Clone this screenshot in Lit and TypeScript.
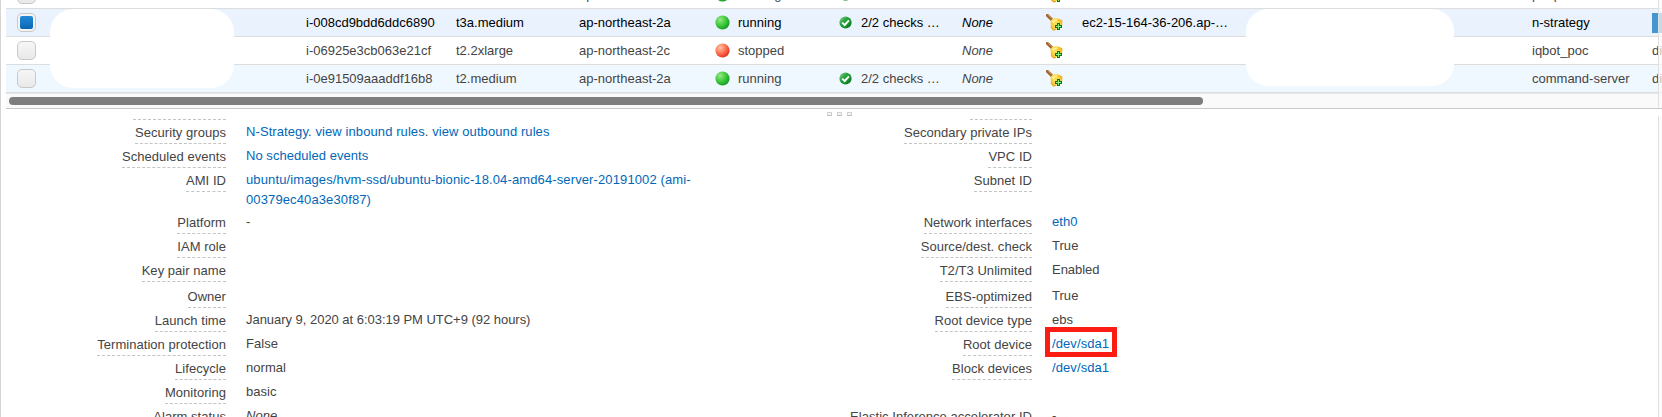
import { LitElement, html, svg, css, nothing } from "lit";
import { customElement, property } from "lit/decorators.js";

interface Instance {
  id: string; type: string; zone: string; state: "running" | "stopped";
  checks: boolean; dns: string; key: string; extra: string; selected?: boolean;
}
interface Detail { label: string; links?: string[]; text?: string; italic?: boolean; kind?: string; marked?: boolean; }

const INSTANCES: Instance[] = [
  { id: "", type: "", zone: "ap-northeast-2a", state: "running", checks: true, dns: "", key: "people", extra: "" },
  { id: "i-008cd9bdd6ddc6890", type: "t3a.medium", zone: "ap-northeast-2a", state: "running", checks: true, dns: "ec2-15-164-36-206.ap-…", key: "n-strategy", extra: "", selected: true },
  { id: "i-06925e3cb063e21cf", type: "t2.2xlarge", zone: "ap-northeast-2c", state: "stopped", checks: false, dns: "", key: "iqbot_poc", extra: "disabled" },
  { id: "i-0e91509aaaddf16b8", type: "t2.medium", zone: "ap-northeast-2a", state: "running", checks: true, dns: "", key: "command-server", extra: "disabled" },
];

const LEFT: Detail[] = [
  { label: "Security groups", links: ["N-Strategy", "view inbound rules", "view outbound rules"], kind: "wide" },
  { label: "Scheduled events", links: ["No scheduled events"] },
  { label: "AMI ID", links: ["ubuntu/images/hvm-ssd/ubuntu-bionic-18.04-amd64-server-20191002 (ami-00379ec40a3e30f87)"], kind: "tall" },
  { label: "Platform", text: "-" },
  { label: "IAM role" },
  { label: "Key pair name" },
  { label: "Owner", kind: "spaced" },
  { label: "Launch time", text: "January 9, 2020 at 6:03:19 PM UTC+9 (92 hours)", kind: "tight" },
  { label: "Termination protection", text: "False" },
  { label: "Lifecycle", text: "normal" },
  { label: "Monitoring", text: "basic" },
  { label: "Alarm status", text: "None", italic: true },
];
const RIGHT: Detail[] = [
  { label: "Secondary private IPs" },
  { label: "VPC ID" },
  { label: "Subnet ID", kind: "tall" },
  { label: "Network interfaces", links: ["eth0"] },
  { label: "Source/dest. check", text: "True" },
  { label: "T2/T3 Unlimited", text: "Enabled", kind: "tight" },
  { label: "EBS-optimized", text: "True", kind: "spaced" },
  { label: "Root device type", text: "ebs" },
  { label: "Root device", links: ["/dev/sda1"], marked: true, kind: "wide" },
  { label: "Block devices", links: ["/dev/sda1"], kind: "wide" },
  { label: "", text: "" },
  { label: "Elastic Inference accelerator ID", text: "-" },
];

const bell = html`<svg class="bell" width="17" height="17" viewBox="0 0 17 17">
  <defs><linearGradient id="b" x1="0" y1="0.8" x2="1" y2="0.2">
    <stop offset="0" stop-color="#f7b31d"/><stop offset=".4" stop-color="#ffe35c"/><stop offset=".7" stop-color="#ffd23a"/><stop offset="1" stop-color="#eda51c"/>
  </linearGradient></defs>
  <path d="M1.4 1.4 L6.6 6.4" stroke="#a0652c" stroke-width="3" stroke-linecap="round"/>
  <path d="M1.9 1 L7 5.4" stroke="#d8a56a" stroke-width=".8"/>
  <path d="M4.6 7.4 Q6 3.8 10.4 4.2 Q14 4.6 16.4 6.4 L16.2 10.5 Q13.5 15 7.8 16.2 Q5.4 15.4 4.9 12 Q4.6 9.5 4.6 7.4Z" fill="url(#b)"/>
  <path d="M6.6 8.4 Q8 6 11 6.2" stroke="#fff6b0" stroke-width="1.3" fill="none"/>
  <path d="M5 12.6 Q5.8 15.4 7.8 16.2 L10 15.4" stroke="#d98d18" stroke-width=".8" fill="none"/>
  <path d="M11 9h3v2h2v3h-2v2h-3v-2H9v-3h2z" fill="#08751a"/>
  <path d="M12 10h1v2h2v1h-2v2h-1v-2h-2v-1h2z" fill="#8cf07c"/>
</svg>`;

const check = html`<svg width="13" height="13" viewBox="0 0 13 13">
  <defs><linearGradient id="c" x1="0" y1="0" x2="1" y2="1">
    <stop offset="0" stop-color="#9bd09b"/><stop offset=".4" stop-color="#23a33a"/><stop offset="1" stop-color="#067019"/>
  </linearGradient></defs>
  <circle cx="6.5" cy="6.5" r="6.1" fill="url(#c)"/>
  <path d="M3.2 6.6 L5.7 9 L9.9 4.3" stroke="#fff" stroke-width="2" fill="none"/>
</svg>`;

const ball = (state: string) => html`<svg width="15" height="15" viewBox="0 0 15 15">
  <defs><radialGradient id="s" cx=".34" cy=".3" r=".75">
    ${state === "running"
      ? svg`<stop offset="0" stop-color="#93ea85"/><stop offset=".55" stop-color="#3fc83c"/><stop offset="1" stop-color="#139a25"/>`
      : svg`<stop offset="0" stop-color="#ffc2a4"/><stop offset=".55" stop-color="#fd7152"/><stop offset="1" stop-color="#e02c1a"/>`}
  </radialGradient></defs>
  <circle cx="7.5" cy="7.5" r="7.1" fill="url(#s)"/>
</svg>`;

@customElement("instance-row")
export class InstanceRow extends LitElement {
  @property({ attribute: false }) data!: Instance;
  static styles = css`
    :host { display: block; }
    .row { box-sizing: border-box; height: 28px; border-bottom: 1px solid #ddd; display: grid; align-items: center;
      grid-template-columns: 289px 150px 123px 136px 23px 101px 22px 101px 84px 36px 450px 120px 40px;
      padding-left: 11px; color: #444; white-space: nowrap; overflow: hidden; line-height: 27px; }
    .selected { color: #000; }
    .box { box-sizing: border-box; width: 19px; height: 19px; border: 1px solid #c8c8c8; border-radius: 5px;
      background: linear-gradient(#f6f6f6, #e9e9e9); display: grid; place-items: center; }
    .selected .box { background: #f4f4f4; }
    .tick { width: 13px; height: 13px; border-radius: 2px; background: linear-gradient(#2389d8, #0867b5); }
    .none { font-style: italic; }
    svg { display: block; }
    .bar { width: 20px; height: 20px; background: #4596cf; margin-top: 1px; }
  `;
  render() {
    const d = this.data;
    return html`<div class="row ${d.selected ? "selected" : ""}">
      <span class="box">${d.selected ? html`<span class="tick"></span>` : nothing}</span>
      <span>${d.id}</span><span>${d.type}</span><span>${d.zone}</span>
      <span>${ball(d.state)}</span><span>${d.state}</span>
      <span>${d.checks ? check : nothing}</span><span>${d.checks ? "2/2 checks …" : ""}</span>
      <span class="none">None</span><span>${bell}</span>
      <span>${d.dns}</span><span>${d.key}</span>
      <span>${d.selected ? html`<div class="bar"></div>` : d.extra}</span>
    </div>`;
  }
}

@customElement("detail-list")
export class DetailList extends LitElement {
  @property({ attribute: false }) items: Detail[] = [];
  static styles = css`
    :host { display: block; letter-spacing: 0.04px; }
    .item { display: grid; grid-template-columns: 226px 460px; column-gap: 20px; height: 24px; align-items: start; }
    .tall { height: 42px; }
    .spaced { height: 24px; padding-top: 2px; }
    .label { justify-self: end; box-sizing: border-box; height: 24px; line-height: 17px; padding-top: 4px;
      border-bottom: 1px dashed #c4c4c4; white-space: nowrap; }
    .label.empty { border: 0; }
    .value { line-height: 20px; padding-top: 2px; }
    .tall .value { letter-spacing: 0.12px; }
    .wide .value { letter-spacing: 0.09px; }
    .tight .value { letter-spacing: -0.03px; }
    .italic { font-style: italic; }
    .link { color: #0067b8; }
    .anchor { position: relative; }
    .mark { position: absolute; left: -7px; top: -9px; width: 62px; height: 20px; border: 5px solid #fb1d14; }
  `;
  render() {
    return this.items.map((i) => html`<div class="item ${i.kind ?? ""}">
      <span class="label ${i.label ? "" : "empty"}">${i.label}</span>
      <span class="value ${i.italic ? "italic" : ""}">${i.links
        ? i.links.map((l, n) => html`${n ? ". " : ""}<span class="link ${i.marked ? "anchor" : ""}">${l}${i.marked ? html`<span class="mark"></span>` : nothing}</span>`)
        : i.text ?? ""}</span>
    </div>`);
  }
}

@customElement("app-root")
export class AppRoot extends LitElement {
  static styles = css`
    :host { display: block; position: relative; box-sizing: border-box; width: 1662px; height: 417px; overflow: hidden; background: #fff;
      border-left: 1px solid #d4d4d4; padding-left: 5px; font: 13px "Liberation Sans", Arial, sans-serif; color: #444; }
    .table { margin-top: -19px; overflow: hidden; }
    .active { background: #eaf2fe; }
    .alt { background: #f0f8ff; }
    .track { box-sizing: border-box; height: 16px; background: #fafafa; border-top: 1px solid #e8e8e8; border-bottom: 1px solid #c8c8c8; padding: 3px 0 0 3px; }
    .thumb { width: 1194px; height: 8px; border-radius: 4px; background: #7d7d7d; }
    .grip { display: flex; gap: 5px; height: 10px; padding: 3px 0 0 821px; box-sizing: border-box; }
    .dot { box-sizing: border-box; width: 5px; height: 4px; border: 1px solid #d2d2d2; border-bottom-color: #bdbdbd; background: #f2f2f2; }
    .cut { height: 1px; border-top: 1px dashed #c4c4c4; box-sizing: border-box; }
    .panels { display: grid; grid-template-columns: 806px 1fr; margin-left: -6px; height: 298px; overflow: hidden; }
    .a .cut { margin-left: 133px; width: 93px; }
    .b .cut { margin-left: 164px; width: 62px; }
    .cover { position: absolute; top: 9px; background: #fff; }
    .one { left: 49px; width: 184px; height: 79px; border-radius: 23px; }
    .two { left: 1245px; width: 208px; height: 77px; border-radius: 22px; }
    .edge { position: absolute; left: 1657px; width: 4px; box-sizing: border-box; background: rgba(250,250,250,.7); border-left: 1px solid #e0e0e0; }
    .top { top: 0; height: 107px; }
    .bottom { top: 116px; height: 301px; }
  `;
  render() {
    return html`
      <div class="table">
        ${INSTANCES.map((d, n) => html`<instance-row class=${d.selected ? "active" : n === 3 ? "alt" : ""} .data=${d}></instance-row>`)}
      </div>
      <div class="track"><div class="thumb"></div></div>
      <div class="grip"><span class="dot"></span><span class="dot"></span><span class="dot"></span></div>
      <div class="panels">
        <div class="a"><div class="cut"></div><detail-list .items=${LEFT}></detail-list></div>
        <div class="b"><div class="cut"></div><detail-list .items=${RIGHT}></detail-list></div>
      </div>
      <div class="cover one"></div><div class="cover two"></div>
      <div class="edge top"></div><div class="edge bottom"></div>
    `;
  }
}
